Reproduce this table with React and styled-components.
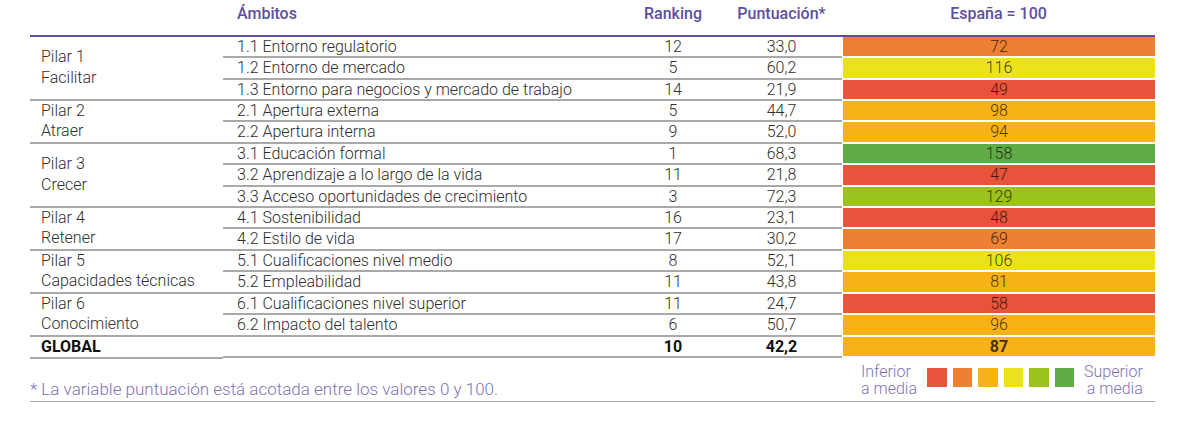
import React from 'react';
import styled, { createGlobalStyle } from 'styled-components';

const GlobalStyle = createGlobalStyle`
  body {
    margin: 0;
    background: #ffffff;
    font-family: Roboto, "Liberation Sans", sans-serif;
    color: #2e2e2e;
  }
`;

const PURPLE = '#5d4f9f';
const SOFT_PURPLE = '#7f73b5';
const RULE = '#a9a9a9';
const ROW_H = 21.33;

const SCALE = [
  { max: 60, color: '#e8543b' },
  { max: 80, color: '#ee8034' },
  { max: 100, color: '#f8b217' },
  { max: 120, color: '#ebe21c' },
  { max: 140, color: '#9cc31d' },
  { max: Infinity, color: '#5fab46' },
];

const colorFor = (value) => SCALE.find(({ max }) => value < max).color;

const groups = [
  {
    pillar: ['Pilar 1', 'Facilitar'],
    rows: [
      ['1.1 Entorno regulatorio', 12, '33,0', 72],
      ['1.2 Entorno de mercado', 5, '60,2', 116],
      ['1.3 Entorno para negocios y mercado de trabajo', 14, '21,9', 49],
    ],
  },
  {
    pillar: ['Pilar 2', 'Atraer'],
    rows: [
      ['2.1 Apertura externa', 5, '44,7', 98],
      ['2.2 Apertura interna', 9, '52,0', 94],
    ],
  },
  {
    pillar: ['Pilar 3', 'Crecer'],
    rows: [
      ['3.1 Educación formal', 1, '68,3', 158],
      ['3.2 Aprendizaje a lo largo de la vida', 11, '21,8', 47],
      ['3.3 Acceso oportunidades de crecimiento', 3, '72,3', 129],
    ],
  },
  {
    pillar: ['Pilar 4', 'Retener'],
    rows: [
      ['4.1 Sostenibilidad', 16, '23,1', 48],
      ['4.2 Estilo de vida', 17, '30,2', 69],
    ],
  },
  {
    pillar: ['Pilar 5', 'Capacidades técnicas'],
    rows: [
      ['5.1 Cualificaciones nivel medio', 8, '52,1', 106],
      ['5.2 Empleabilidad', 11, '43,8', 81],
    ],
  },
  {
    pillar: ['Pilar 6', 'Conocimiento'],
    rows: [
      ['6.1 Cualificaciones nivel superior', 11, '24,7', 58],
      ['6.2 Impacto del talento', 6, '50,7', 96],
    ],
  },
  {
    pillar: ['GLOBAL'],
    bold: true,
    rows: [['', 10, '42,2', 87]],
  },
];

const Wrapper = styled.div`
  width: 1125px;
  margin-left: 30px;
  font-size: 16px;
`;

const HeaderRow = styled.div`
  display: flex;
  height: 37px;
  padding-top: 4px;
  box-sizing: border-box;
  border-bottom: 2px solid ${PURPLE};
  color: ${PURPLE};
  font-weight: 500;
  line-height: 20px;
`;

const PillarCol = styled.div`
  width: 193px;
  flex: none;
`;

const AmbitoCol = styled.div`
  width: 402px;
  flex: none;
  padding-left: 14px;
  box-sizing: border-box;
  white-space: nowrap;
`;

const RankCol = styled.div`
  width: 96px;
  flex: none;
  text-align: center;
`;

const ScoreCol = styled.div`
  width: 121px;
  flex: none;
  text-align: center;
`;

const SwatchCol = styled.div`
  flex: 1;
  text-align: center;
`;

const Group = styled.div`
  display: flex;
  font-weight: ${({ $bold }) => ($bold ? 700 : 300)};
  color: ${({ $bold }) => ($bold ? '#111111' : '#2e2e2e')};
`;

const Pillar = styled(PillarCol)`
  display: flex;
  flex-direction: column;
  justify-content: center;
  padding-left: 11px;
  box-sizing: border-box;
  border-bottom: 2px solid ${RULE};
  line-height: 20.5px;
`;

const Rows = styled.div`
  flex: 1;
  display: flex;
  flex-direction: column;
`;

const Row = styled.div`
  display: flex;
  height: ${ROW_H}px;
`;

const DataCells = styled.div`
  display: flex;
  border-bottom: 2px solid ${RULE};
  box-sizing: border-box;
  line-height: ${ROW_H - 2}px;
`;

const Swatch = styled.div`
  flex: 1;
  margin: 0 0 2px 1px;
  background: ${({ $color }) => $color};
  color: rgba(20, 10, 0, 0.8);
  text-align: center;
  line-height: ${ROW_H - 2}px;
`;

const Footer = styled.div`
  display: flex;
  height: 43px;
  box-sizing: border-box;
  border-bottom: 1.5px solid ${RULE};
`;

const Note = styled.div`
  width: 812px;
  flex: none;
  align-self: flex-end;
  padding-bottom: 2px;
  color: ${SOFT_PURPLE};
  font-weight: 300;
  font-size: 17px;
`;

const Legend = styled.div`
  flex: 1;
  display: flex;
  align-items: center;
  padding-left: 19px;
  gap: 10px;
  color: ${SOFT_PURPLE};
  font-weight: 300;
  font-size: 16px;
  line-height: 17px;
`;

const LegendText = styled.div`
  text-align: ${({ $right }) => ($right ? 'right' : 'left')};
`;

const Squares = styled.div`
  display: flex;
  gap: 6px;
  margin-top: -5px;
`;

const Square = styled.span`
  display: block;
  width: 19.5px;
  height: 19px;
  background: ${({ $color }) => $color};
`;

const App = () => (
  <>
    <GlobalStyle />
    <Wrapper>
      <HeaderRow>
        <PillarCol />
        <AmbitoCol>Ámbitos</AmbitoCol>
        <RankCol>Ranking</RankCol>
        <ScoreCol>Puntuación*</ScoreCol>
        <SwatchCol>España = 100</SwatchCol>
      </HeaderRow>
      {groups.map(({ pillar, rows, bold }) => (
        <Group key={pillar.join()} $bold={bold}>
          <Pillar>
            {pillar.map((line) => (
              <div key={line}>{line}</div>
            ))}
          </Pillar>
          <Rows>
            {rows.map(([ambito, rank, score, index]) => (
              <Row key={`${ambito}${rank}`}>
                <DataCells>
                  <AmbitoCol>{ambito}</AmbitoCol>
                  <RankCol>{rank}</RankCol>
                  <ScoreCol>{score}</ScoreCol>
                </DataCells>
                <Swatch $color={colorFor(index)}>{index}</Swatch>
              </Row>
            ))}
          </Rows>
        </Group>
      ))}
      <Footer>
        <Note>* La variable puntuación está acotada entre los valores 0 y 100.</Note>
        <Legend>
          <LegendText>
            Inferior
            <br />
            a media
          </LegendText>
          <Squares>
            {SCALE.map(({ color }) => (
              <Square key={color} $color={color} />
            ))}
          </Squares>
          <LegendText $right>
            Superior
            <br />
            a media
          </LegendText>
        </Legend>
      </Footer>
    </Wrapper>
  </>
);

export default App;
